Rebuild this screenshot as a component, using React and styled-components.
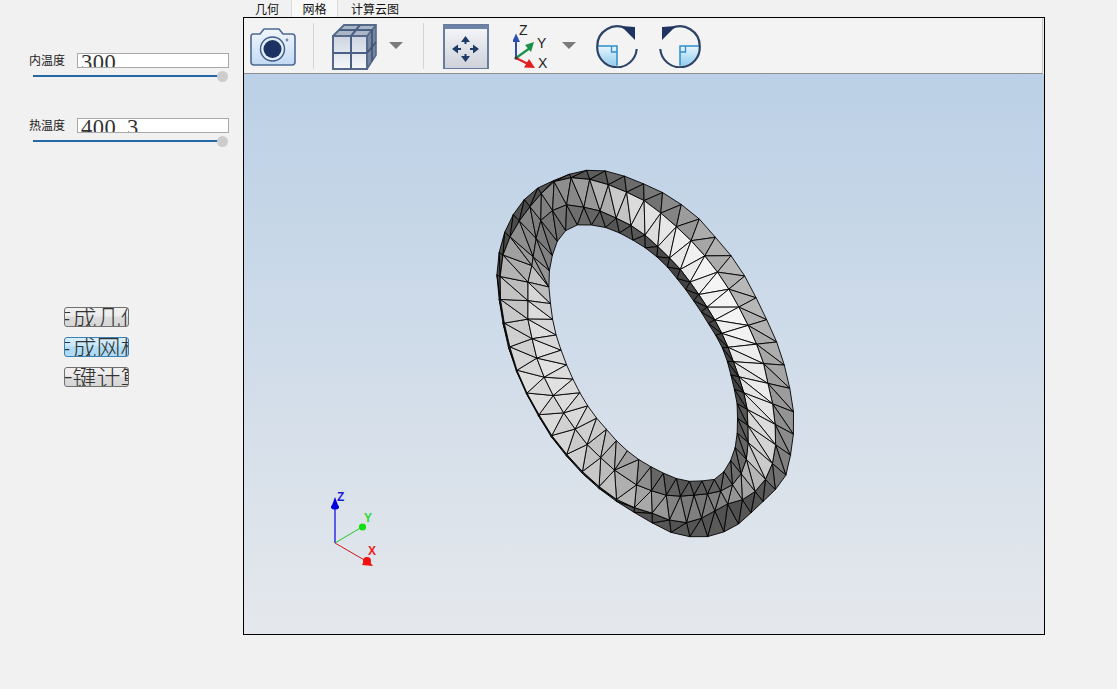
import React, { useMemo } from 'react';
import styled, { createGlobalStyle } from 'styled-components';

const GlobalStyle = createGlobalStyle`
  html, body { margin: 0; padding: 0; background: #f1f1f1; }
  body { width: 1117px; height: 689px; overflow: hidden; font-family: "Noto Sans CJK SC", "Liberation Sans", sans-serif; }
`;

const Page = styled.div`
  display: flex;
  width: 1117px;
  height: 689px;
  background: #f1f1f1;
`;

const SidePanel = styled.div`
  width: 243px;
  flex: none;
  padding-top: 53px;
  box-sizing: border-box;
`;

const ParamGroup = styled.div`
  height: 65px;
`;

const ParamRow = styled.div`
  display: flex;
  align-items: center;
  height: 15px;
  padding-left: 29px;
`;

const ParamLabel = styled.span`
  width: 48px;
  font-size: 12px;
  line-height: 13px;
  height: 15px;
  color: #222;
`;

const ParamField = styled.div`
  width: 152px;
  height: 15px;
  box-sizing: border-box;
  border: 1px solid #a9a9a9;
  background: #fff;
  overflow: hidden;
  padding-left: 3px;
  font-family: "Liberation Serif", serif;
  font-size: 22.5px;
  letter-spacing: 0.5px;
  line-height: 18px;
  color: #333;
`;

const FieldDot = styled.span`
  letter-spacing: 5px;
`;

const SliderTrack = styled.div`
  position: relative;
  width: 189px;
  height: 2px;
  margin: 7px 0 0 33px;
  background: #2469a6;
`;

const SliderKnob = styled.div`
  position: absolute;
  right: -6px;
  top: -4px;
  width: 11px;
  height: 11px;
  border-radius: 50%;
  background: #cdcdcd;
`;

const ButtonColumn = styled.div`
  display: flex;
  flex-direction: column;
  gap: 10px;
  margin: 124px 0 0 64px;
`;

const ActionButton = styled.div`
  width: 65px;
  height: 20px;
  box-sizing: border-box;
  display: flex;
  justify-content: center;
  align-items: center;
  overflow: hidden;
  white-space: nowrap;
  border-radius: 3px;
  border: 1px solid ${p => (p.$hover ? '#3c7fb1' : '#707070')};
  background: ${p => (p.$hover
    ? 'linear-gradient(#d8effb 0%, #c6e8fb 45%, #b0dcf5 50%, #aedbf5 100%)'
    : 'linear-gradient(#f0f0f0 0%, #ececec 45%, #dcdcdc 50%, #d6d6d6 100%)')};
  font-size: 24px;
  font-weight: 300;
  line-height: 18px;
  color: #333;
`;

const RightPane = styled.div`
  width: 802px;
  flex: none;
  display: flex;
  flex-direction: column;
`;

const TabBar = styled.div`
  display: flex;
  height: 17px;
`;

const Tab = styled.div`
  width: ${p => p.$w}px;
  text-align: center;
  font-size: 12px;
  line-height: 18px;
  color: #111;
  background: ${p => (p.$active ? '#f8f8f8' : 'transparent')};
  box-shadow: ${p => (p.$active ? 'inset 1px 0 #dcdcdc, inset -1px 0 #dcdcdc' : 'none')};
`;

const Frame = styled.div`
  height: 618px;
  box-sizing: border-box;
  border: 1px solid #000;
  display: flex;
  flex-direction: column;
  background: #f0f0f0;
`;

const Toolbar = styled.div`
  height: 56px;
  flex: none;
  box-sizing: border-box;
  display: flex;
  align-items: center;
  margin-right: 1px;
  padding-left: 6px;
  background: #f3f3f3;
  border-bottom: 1px solid #8f8f8f;
  border-right: 1px solid #c8c8c8;
`;

const ToolIcon = styled.svg`
  flex: none;
  display: block;
  margin-left: ${p => p.$gap || 0}px;
  transform: ${p => (p.$flip ? 'scaleX(-1)' : 'none')};
`;

const Separator = styled.div`
  width: 1px;
  height: 46px;
  flex: none;
  background: #d4d4d4;
  margin-left: ${p => p.$gap}px;
`;

const Viewport = styled.div`
  position: relative;
  flex: 1;
  background: linear-gradient(#bbd0e6 0%, #e5e8ec 100%);
  overflow: hidden;
`;

const CanvasSvg = styled.svg`
  position: absolute;
  left: 0;
  top: 0;
`;

// ---- mesh of the ring: four closed outlines, sampled round the centre ----
const CX = 648;
const CY = 356;

const RING_S = [[597,170],[620,175],[648,186],[673,200],[720,243],[758,302],[777,343],[788,380],[793,427],[791,452],[785,477],[771,494],[757,507],[737,525],[718,534],[700,537],[673,533],[647,520],[627,508],[610,497],[595,485],[579,470],[564,453],[550,435],[538,415],[527,395],[518,375],[510,353],[505,333],[500,303],[497,280],[498,260],[503,237],[513,215],[532,192],[555,180],[577,172]];
const RING_A = [[568,178],[583,178],[598,182],[615,187],[632,195],[648,203],[665,217],[682,232],[697,247],[711,264],[725,283],[736,302],[747,323],[756,343],[764,365],[769,387],[775,427],[773,460],[765,480],[748,497],[725,505],[702,518],[680,523],[660,516],[643,510],[627,505],[610,495],[595,483],[579,468],[564,451],[550,433],[538,413],[527,393],[518,373],[511,351],[506,331],[501,303],[500,280],[503,255],[512,233],[526,212],[540,195],[555,181]];
const RING_B = [[528,300],[528,282],[532,265],[536,240],[541,220],[565,205],[582,207],[597,210],[613,217],[630,225],[647,237],[663,252],[677,266],[692,285],[705,304],[717,324],[727,345],[735,367],[742,387],[747,408],[748,427],[745,463],[738,478],[728,488],[712,493],[695,495],[682,496],[665,495],[650,490],[633,483],[617,472],[601,458],[585,442],[571,423],[558,404],[547,383],[538,362],[533,342],[528,320]];
const RING_H = [[573,226],[560,237],[552,257],[549,283],[552,310],[560,347],[570,373],[580,393],[592,412],[607,430],[622,446],[638,459],[657,470],[683,480],[700,481],[717,478],[732,457],[737,423],[732,380],[722,347],[708,323],[693,300],[678,280],[660,260],[640,245],[630,238],[607,228],[587,225]];

const SHADE_OUTER = [[0,0x70],[10,0x8a],[23,0xa8],[47,0xb5],[66,0xb5],[90,0xaa],[107,0x99],[122,0x88],[131,0x77],[142,0x50],[163,0x58],[174,0x55],[200,0x44],[317,0x4d],[330,0x50],[345,0x5a]];
const SHADE_MIDDLE = [[4,0xe0],[19,0xec],[46,0xf2],[75,0xf0],[99,0xe6],[107,0xe8],[123,0xd8],[134,0xc8],[141,0xaa],[150,0x90],[157,0x77],[168,0x80],[177,0x99],[183,0xaa],[198,0xc0],[219,0xd0],[235,0xd8],[257,0xdc],[285,0xc8],[295,0xc0],[304,0xaa],[313,0x8c],[320,0x80],[330,0x88],[336,0x8c],[343,0xaa],[350,0xc8],[357,0xdc]];
const SHADE_INNER = [[10,0x44],[110,0x44],[122,0x55],[136,0x66],[145,0x6a],[162,0x55],[175,0x66],[184,0x99],[201,0xbb],[222,0xd5],[245,0xde],[255,0xe0],[293,0xd8],[303,0xbb],[309,0x90],[320,0x74],[332,0x70],[343,0x5a],[356,0x55]];

const SEGMENTS = 48;

function polarOutline(points) {
  return points
    .map(([x, y]) => ({
      a: ((Math.atan2(x - CX, CY - y) * 180) / Math.PI + 360) % 360,
      r: Math.hypot(x - CX, y - CY),
    }))
    .sort((p, q) => p.a - q.a);
}

function radiusAt(outline, deg) {
  const n = outline.length;
  let i = outline.findIndex(p => p.a > deg);
  if (i < 0) i = 0;
  const p1 = outline[(i - 1 + n) % n];
  const p2 = outline[i];
  const p0 = outline[(i - 2 + n) % n];
  const p3 = outline[(i + 1) % n];
  const span = (p2.a - p1.a + 360) % 360 || 1;
  const t = ((deg - p1.a + 360) % 360) / span;
  return 0.5 * (2 * p1.r + (p2.r - p0.r) * t + (2 * p0.r - 5 * p1.r + 4 * p2.r - p3.r) * t * t + (3 * p1.r - p0.r - 3 * p2.r + p3.r) * t * t * t);
}

function shadeAt(table, deg) {
  const n = table.length;
  for (let i = 0; i < n; i++) {
    const [a1, v1] = table[i];
    const [a2, v2] = table[(i + 1) % n];
    const span = (a2 - a1 + 360) % 360;
    const d = (deg - a1 + 360) % 360;
    if (d <= span) return v1 + ((v2 - v1) * d) / span;
  }
  return table[0][1];
}

function gray(v) {
  const c = Math.max(0, Math.min(255, Math.round(v)));
  return `rgb(${c},${c},${c})`;
}

// the ring is round in 3D, so the vertices are even on the ellipse, not by screen angle
function segmentAngle(i) {
  const t = (i / SEGMENTS) * 2 * Math.PI;
  const al = (61.7 * Math.PI) / 180;
  const x = 197 * Math.cos(t) * Math.cos(al) - 130 * Math.sin(t) * Math.sin(al);
  const y = 197 * Math.cos(t) * Math.sin(al) + 130 * Math.sin(t) * Math.cos(al);
  return ((Math.atan2(x, -y) * 180) / Math.PI + 360) % 360;
}

const inLowerLeft = deg => deg > 190 && deg < 305;

function buildMesh() {
  const rings = [RING_S, RING_A, RING_B, RING_H].map(polarOutline);
  const vertex = (ring, i) => {
    const shift = ring === 2 && inLowerLeft(segmentAngle(i)) ? 0.5 : 0;
    const deg = segmentAngle(i + shift);
    const r = radiusAt(rings[ring], deg);
    const rad = (deg * Math.PI) / 180;
    return [CX + r * Math.sin(rad), CY - r * Math.cos(rad)];
  };
  const tables = [SHADE_OUTER, SHADE_MIDDLE, SHADE_INNER];
  const tris = [];
  for (let band = 0; band < 3; band++) {
    for (let i = 0; i < SEGMENTS; i++) {
      const a = vertex(band, i);
      const b = vertex(band, i + 1);
      const c = vertex(band + 1, i);
      const d = vertex(band + 1, i + 1);
      const deg = segmentAngle(i + 0.5);
      const base = shadeAt(tables[band], deg);
      const straight = band === 2 && inLowerLeft(deg);
      const pairs = straight ? [[a, b, d], [a, d, c]] : [[a, b, c], [b, d, c]];
      pairs.forEach((pts, k) => {
        tris.push({
          key: `${band}-${i}-${k}`,
          points: pts.map(p => `${p[0].toFixed(1)},${p[1].toFixed(1)}`).join(' '),
          fill: gray(base + (k === 0 ? 3 : -3)),
        });
      });
    }
  }
  return tris;
}

const RingMesh = () => {
  const tris = useMemo(buildMesh, []);
  return (
    <g stroke="#000" strokeWidth="0.9" strokeLinejoin="round">
      {tris.map(t => <polygon key={t.key} points={t.points} fill={t.fill} />)}
    </g>
  );
};

const AxisLetter = styled.text`
  font-family: "Liberation Sans", sans-serif;
  font-weight: 700;
  font-size: 12px;
`;

const IconLetter = styled.text`
  font-family: "Liberation Sans", sans-serif;
  font-size: 14px;
  fill: #222;
`;

const ViewTriad = () => (
  <g>
    <line x1="335" y1="543" x2="335" y2="505" stroke="#0000e0" strokeWidth="1.2" />
    <path d="M335 497 L339 508 L331 508 Z" fill="#0000e0" />
    <ellipse cx="335" cy="507" rx="4" ry="2.5" fill="#0000e0" />
    <AxisLetter x="337" y="501" fill="#1a1ad8">Z</AxisLetter>
    <line x1="335" y1="543" x2="362" y2="527" stroke="#22c822" strokeWidth="1" />
    <circle cx="362.5" cy="527" r="3.6" fill="#10e010" />
    <AxisLetter x="364" y="522" fill="#30d830">Y</AxisLetter>
    <line x1="335" y1="543" x2="366" y2="561" stroke="#d01818" strokeWidth="1" />
    <circle cx="367" cy="561" r="4" fill="#f01010" />
    <path d="M362 565 L373 566 L366 557 Z" fill="#f01010" />
    <AxisLetter x="368" y="555" fill="#f02020">X</AxisLetter>
  </g>
);

const CameraIcon = () => (
  <ToolIcon width="46" height="40" viewBox="0 0 46 40">
    <defs>
      <linearGradient id="camBody" x1="0" y1="0" x2="0" y2="1">
        <stop offset="0" stopColor="#f2f6fb" />
        <stop offset="1" stopColor="#c2daf4" />
      </linearGradient>
    </defs>
    <path d="M3 8 H10 L14 3 H29 L33 8 H42 Q45 8 45 11 V36 Q45 39 42 39 H4 Q1 39 1 36 V11 Q1 8 3 8 Z" fill="url(#camBody)" stroke="#4d6a92" strokeWidth="1.6" strokeLinejoin="round" />
    <circle cx="22.5" cy="23" r="12" fill="#e4edf6" stroke="#3d5b88" strokeWidth="1.4" />
    <circle cx="22.5" cy="23" r="9" fill="#1b3263" />
    <circle cx="37" cy="14" r="1.4" fill="#6e87a8" />
  </ToolIcon>
);

const CubeIcon = () => (
  <ToolIcon width="46" height="48" viewBox="0 0 46 48" $gap={18}>
    <defs>
      <linearGradient id="cubeFace" x1="0" y1="0" x2="0" y2="1">
        <stop offset="0" stopColor="#ccd4e0" />
        <stop offset="1" stopColor="#f6f8fa" />
      </linearGradient>
    </defs>
    <path d="M35 14 L44 3 V33 L35 47 Z" fill="#75869f" stroke="#55698a" strokeWidth="1.6" strokeLinejoin="round" />
    <path d="M1 14 H35 V47 H1 Z" fill="url(#cubeFace)" stroke="#55698a" strokeWidth="2" />
    <path d="M1 14 L12 3 H44 L35 14 Z" fill="#aab5c6" stroke="#55698a" strokeWidth="1.8" strokeLinejoin="round" />
    <path d="M19 14 V47 M1 31 H35 M19 14 L28 3 M7 8 H40" stroke="#4a5f84" strokeWidth="2" fill="none" />
    <path d="M35 31 L44 20 M40 8 V39" stroke="#3e5176" strokeWidth="1.6" fill="none" />
  </ToolIcon>
);

const Caret = ({ gap }) => (
  <ToolIcon width="14" height="7" viewBox="0 0 14 7" $gap={gap}>
    <path d="M0 0 H14 L7 7 Z" fill="#7b7b7b" />
  </ToolIcon>
);

const FitIcon = () => (
  <ToolIcon width="46" height="46" viewBox="0 0 46 46" $gap={19}>
    <defs>
      <linearGradient id="fitFace" x1="0" y1="0" x2="0" y2="1">
        <stop offset="0" stopColor="#f7f8fa" />
        <stop offset="1" stopColor="#ccd0d8" />
      </linearGradient>
    </defs>
    <rect x="1" y="2" width="44" height="44" fill="url(#fitFace)" stroke="#5a7096" strokeWidth="1.8" />
    <rect x="1" y="2" width="44" height="4" fill="#6c83a6" />
    <path d="M22.5 17 V21 M22.5 31 V35 M13 26 H18 M27 26 H32" stroke="#1f3a66" strokeWidth="2" />
    <path d="M22.5 13 L27 19 H18 Z M22.5 39 L27 33 H18 Z M9 26 L15 21.5 V30.5 Z M36 26 L30 21.5 V30.5 Z" fill="#1f3a66" />
  </ToolIcon>
);

const AxesIcon = () => (
  <ToolIcon width="40" height="48" viewBox="0 0 40 48" $gap={24}>
    <path d="M3 36 V18" stroke="#2a4fb0" strokeWidth="2" />
    <path d="M3 11.5 L7 20 H-1 Z" fill="#2a4fb0" />
    <path d="M3 36 L17 26" stroke="#1c9048" strokeWidth="2.2" />
    <path d="M21 20 L18 30 L12 23 Z" fill="#1c9048" />
    <path d="M3 36 L17 43" stroke="#e02020" strokeWidth="2.2" />
    <path d="M22 46 L11 45.5 L16 37 Z" fill="#e02020" />
    <circle cx="3" cy="36" r="1.6" fill="#333" />
    <IconLetter x="6" y="12.5">Z</IconLetter>
    <IconLetter x="24" y="25.5">Y</IconLetter>
    <IconLetter x="25" y="45.5">X</IconLetter>
  </ToolIcon>
);

const RotateIcon = ({ flip, gap }) => (
  <ToolIcon width="42" height="44" viewBox="0 0 42 44" $gap={gap} $flip={flip}>
    <defs>
      <linearGradient id="rotFill" x1="0" y1="0" x2="0" y2="1">
        <stop offset="0" stopColor="#e8f5fc" />
        <stop offset="1" stopColor="#92cdf0" />
      </linearGradient>
    </defs>
    <path d="M1.3 22 H21 V41.7 A19.7 19.7 0 0 1 1.3 22 Z" fill="url(#rotFill)" />
    <path d="M1.3 22 H21 V41.7" fill="none" stroke="#2f8ec9" strokeWidth="1.5" />
    <path d="M15.5 22 V28 H21" fill="none" stroke="#2f8ec9" strokeWidth="1.3" />
    <path d="M1.3 22 A19.7 19.7 0 0 1 30 4.5" fill="none" stroke="#2d4468" strokeWidth="2.2" />
    <path d="M40.7 25 A19.7 19.7 0 0 1 1.3 22" fill="none" stroke="#2d4468" strokeWidth="2.2" />
    <path d="M25 2 L39 3 L39 16 Z" fill="#1f3560" />
  </ToolIcon>
);

const params = [
  { label: '内温度', value: '300' },
  { label: '热温度', value: <>400<FieldDot>.</FieldDot>3</> },
];

const App = () => (
  <Page>
    <GlobalStyle />
    <SidePanel>
      {params.map(p => (
        <ParamGroup key={p.label}>
          <ParamRow>
            <ParamLabel>{p.label}</ParamLabel>
            <ParamField>{p.value}</ParamField>
          </ParamRow>
          <SliderTrack><SliderKnob /></SliderTrack>
        </ParamGroup>
      ))}
      <ButtonColumn>
        <ActionButton>生成几何</ActionButton>
        <ActionButton $hover>生成网格</ActionButton>
        <ActionButton>一键计算</ActionButton>
      </ButtonColumn>
    </SidePanel>
    <RightPane>
      <TabBar>
        <Tab $w={48}>几何</Tab>
        <Tab $w={47} $active>网格</Tab>
        <Tab $w={74}>计算云图</Tab>
      </TabBar>
      <Frame>
        <Toolbar>
          <CameraIcon />
          <Separator $gap={17} />
          <CubeIcon />
          <Caret gap={11} />
          <Separator $gap={20} />
          <FitIcon />
          <AxesIcon />
          <Caret gap={9} />
          <RotateIcon gap={20} />
          <RotateIcon flip gap={21} />
        </Toolbar>
        <Viewport>
          <CanvasSvg width="800" height="560" viewBox="244 74 800 560">
            <RingMesh />
            <ViewTriad />
          </CanvasSvg>
        </Viewport>
      </Frame>
    </RightPane>
  </Page>
);

export default App;
